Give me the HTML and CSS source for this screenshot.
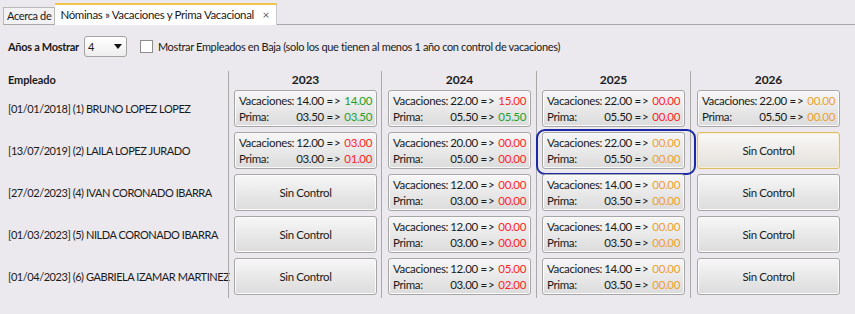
FILE: index.html
```html
<!DOCTYPE html>
<html lang="es">
<head>
<meta charset="utf-8">
<title>Nóminas » Vacaciones y Prima Vacacional</title>
<link rel="stylesheet" href="styles.css">
</head>
<body>
<div class="tabbar">
  <div class="tab">Acerca de</div>
  <div class="tab active">Nóminas » Vacaciones y Prima Vacacional <span class="close">×</span></div>
  <div class="tabfill"></div>
</div>
<div class="toolbar">
  <span class="lbl-bold">Años a Mostrar</span>
  <div class="select"><span>4</span><span class="arrow"></span></div>
  <span class="checkbox"></span>
  <span class="chk-text">Mostrar Empleados en Baja (solo los que tienen al menos 1 año con control de vacaciones)</span>
</div>
<div class="grid">
  <div class="col emp">
    <div class="head">Empleado</div>
    <div class="row">[01/01/2018] (1) BRUNO LOPEZ LOPEZ</div>
    <div class="row">[13/07/2019] (2) LAILA LOPEZ JURADO</div>
    <div class="row">[27/02/2023] (4) IVAN CORONADO IBARRA</div>
    <div class="row">[01/03/2023] (5) NILDA CORONADO IBARRA</div>
    <div class="row">[01/04/2023] (6) GABRIELA IZAMAR MARTINEZ</div>
  </div>
  <div class="col year">
    <div class="head">2023</div>
    <div class="cell"><div class="btn data"><span>Vacaciones:</span><span class="v">14.00 <i>=&gt;</i> <b class="g">14.00</b></span><span>Prima:</span><span class="v">03.50 <i>=&gt;</i> <b class="g">03.50</b></span></div></div>
    <div class="cell"><div class="btn data"><span>Vacaciones:</span><span class="v">12.00 <i>=&gt;</i> <b class="r">03.00</b></span><span>Prima:</span><span class="v">03.00 <i>=&gt;</i> <b class="r">01.00</b></span></div></div>
    <div class="cell"><div class="btn">Sin Control</div></div>
    <div class="cell"><div class="btn">Sin Control</div></div>
    <div class="cell"><div class="btn">Sin Control</div></div>
  </div>
  <div class="col year wide">
    <div class="head">2024</div>
    <div class="cell"><div class="btn data"><span>Vacaciones:</span><span class="v">22.00 <i>=&gt;</i> <b class="r">15.00</b></span><span>Prima:</span><span class="v">05.50 <i>=&gt;</i> <b class="g">05.50</b></span></div></div>
    <div class="cell"><div class="btn data"><span>Vacaciones:</span><span class="v">20.00 <i>=&gt;</i> <b class="r">00.00</b></span><span>Prima:</span><span class="v">05.00 <i>=&gt;</i> <b class="r">00.00</b></span></div></div>
    <div class="cell"><div class="btn data"><span>Vacaciones:</span><span class="v">12.00 <i>=&gt;</i> <b class="r">00.00</b></span><span>Prima:</span><span class="v">03.00 <i>=&gt;</i> <b class="r">00.00</b></span></div></div>
    <div class="cell"><div class="btn data"><span>Vacaciones:</span><span class="v">12.00 <i>=&gt;</i> <b class="r">00.00</b></span><span>Prima:</span><span class="v">03.00 <i>=&gt;</i> <b class="r">00.00</b></span></div></div>
    <div class="cell"><div class="btn data"><span>Vacaciones:</span><span class="v">12.00 <i>=&gt;</i> <b class="r">05.00</b></span><span>Prima:</span><span class="v">03.00 <i>=&gt;</i> <b class="r">02.00</b></span></div></div>
  </div>
  <div class="col year">
    <div class="head">2025</div>
    <div class="cell"><div class="btn data"><span>Vacaciones:</span><span class="v">22.00 <i>=&gt;</i> <b class="r">00.00</b></span><span>Prima:</span><span class="v">05.50 <i>=&gt;</i> <b class="r">00.00</b></span></div></div>
    <div class="cell selected"><div class="btn data"><span>Vacaciones:</span><span class="v">22.00 <i>=&gt;</i> <b class="o">00.00</b></span><span>Prima:</span><span class="v">05.50 <i>=&gt;</i> <b class="o">00.00</b></span></div></div>
    <div class="cell"><div class="btn data"><span>Vacaciones:</span><span class="v">14.00 <i>=&gt;</i> <b class="o">00.00</b></span><span>Prima:</span><span class="v">03.50 <i>=&gt;</i> <b class="o">00.00</b></span></div></div>
    <div class="cell"><div class="btn data"><span>Vacaciones:</span><span class="v">14.00 <i>=&gt;</i> <b class="o">00.00</b></span><span>Prima:</span><span class="v">03.50 <i>=&gt;</i> <b class="o">00.00</b></span></div></div>
    <div class="cell"><div class="btn data"><span>Vacaciones:</span><span class="v">14.00 <i>=&gt;</i> <b class="o">00.00</b></span><span>Prima:</span><span class="v">03.50 <i>=&gt;</i> <b class="o">00.00</b></span></div></div>
  </div>
  <div class="col year wide">
    <div class="head">2026</div>
    <div class="cell"><div class="btn data"><span>Vacaciones:</span><span class="v">22.00 <i>=&gt;</i> <b class="o">00.00</b></span><span>Prima:</span><span class="v">05.50 <i>=&gt;</i> <b class="o">00.00</b></span></div></div>
    <div class="cell"><div class="btn hover">Sin Control</div></div>
    <div class="cell"><div class="btn">Sin Control</div></div>
    <div class="cell"><div class="btn">Sin Control</div></div>
    <div class="cell"><div class="btn">Sin Control</div></div>
  </div>
</div>
</body>
</html>
```
FILE: styles.css
```css
* { box-sizing: border-box; }
html, body { margin: 0; padding: 0; }
body {
  width: 855px;
  height: 314px;
  background: #ebe9ed;
  font-family: Lato, "Open Sans", sans-serif;
  font-size: 11px;
  letter-spacing: -0.35px;
  color: #1a1a1a;
  overflow: hidden;
}
.tabbar {
  display: flex;
  align-items: flex-end;
  height: 25px;
  padding-left: 3px;
  padding-top: 3px;
}
.tab {
  height: 18px;
  padding: 0 3px 0 3px;
  line-height: 16px;
  background: #f2f1f3;
  border: 1px solid #b9b9b9;
  border-bottom: 1px solid #a8a8a8;
}
.tab.active {
  height: 22px;
  line-height: 19px;
  background: #ffffff;
  border: none;
  border-top: 2px solid #f3c44a;
  border-right: 1px solid #c8c8c8;
  padding: 0 7px 0 5px;
  font-size: 11.5px;
}
.close { color: #666; margin-left: 6px; font-size: 12px; }
.tabfill { flex: 1; border-bottom: 1px solid #a8a8a8; }
.toolbar {
  display: flex;
  align-items: center;
  height: 21px;
  margin-top: 11px;
  padding-left: 8px;
}
.lbl-bold { font-weight: bold; letter-spacing: -0.3px; }
.select {
  width: 43px;
  height: 21px;
  margin-left: 5px;
  border: 1px solid #a3a3a3;
  border-radius: 3px;
  background: linear-gradient(#ffffff, #eeeeee);
  display: flex;
  align-items: center;
  justify-content: space-between;
  padding: 0 4px 0 3px;
}
.arrow {
  width: 0; height: 0;
  border-left: 4px solid transparent;
  border-right: 4px solid transparent;
  border-top: 5px solid #111;
}
.checkbox {
  width: 13px; height: 13px;
  margin-left: 13px;
  border: 1px solid #8c8c8c;
  background: #ffffff;
}
.chk-text { margin-left: 5px; }
.grid {
  display: grid;
  grid-template-columns: 220px 153px 155px 154px 156px;
  margin-top: 14px;
  padding-left: 8px;
}
.col { display: flex; flex-direction: column; }
.head {
  height: 17px;
  line-height: 17px;
  font-weight: bold;
  letter-spacing: -0.1px;
}
.year .head { font-size: 12px; text-align: center; width: 143px; }
.year { border-left: 1px solid #a9a9a9; padding-left: 5px; }
.year.wide { padding-left: 6px; }
.emp .row {
  height: 42px;
  line-height: 42px;
  white-space: nowrap;
  letter-spacing: -0.45px;
}
.cell { height: 42px; padding-top: 2px; position: relative; }
.cell:last-child { height: 39px; }
.btn {
  width: 143px;
  height: 37px;
  border: 1px solid #a6a6a6;
  border-radius: 3px;
  background: linear-gradient(#f7f7f7, #e6e6e6 60%, #dcdcdc);
  box-shadow: inset 0 0 0 1px #fbfbfb;
  display: flex;
  align-items: center;
  justify-content: center;
  font-size: 11.5px;
}
.btn.data {
  display: grid;
  grid-template-columns: auto 1fr;
  column-gap: 2px;
  grid-auto-rows: 16px;
  align-content: center;
  line-height: 16px;
  padding: 0 10px 0 10px;
}
.btn .v { justify-self: end; white-space: nowrap; }
.btn i { font-style: normal; letter-spacing: 1px; }
.btn b { font-weight: normal; }
.g { color: #23a12a; }
.r { color: #ff1f25; }
.o { color: #ef9f30; }
.btn.hover {
  border-color: #dfbb63;
  background: linear-gradient(#faf9f8, #ece9e6 60%, #e3e0dc);
  box-shadow: inset 0 0 0 1px #f9efd4;
}
.cell.selected::after {
  content: "";
  position: absolute;
  left: -6px;
  right: -6px;
  top: -1px;
  bottom: -3px;
  border: 2.5px solid #1b2aa4;
  border-radius: 9px;
  pointer-events: none;
}
```
